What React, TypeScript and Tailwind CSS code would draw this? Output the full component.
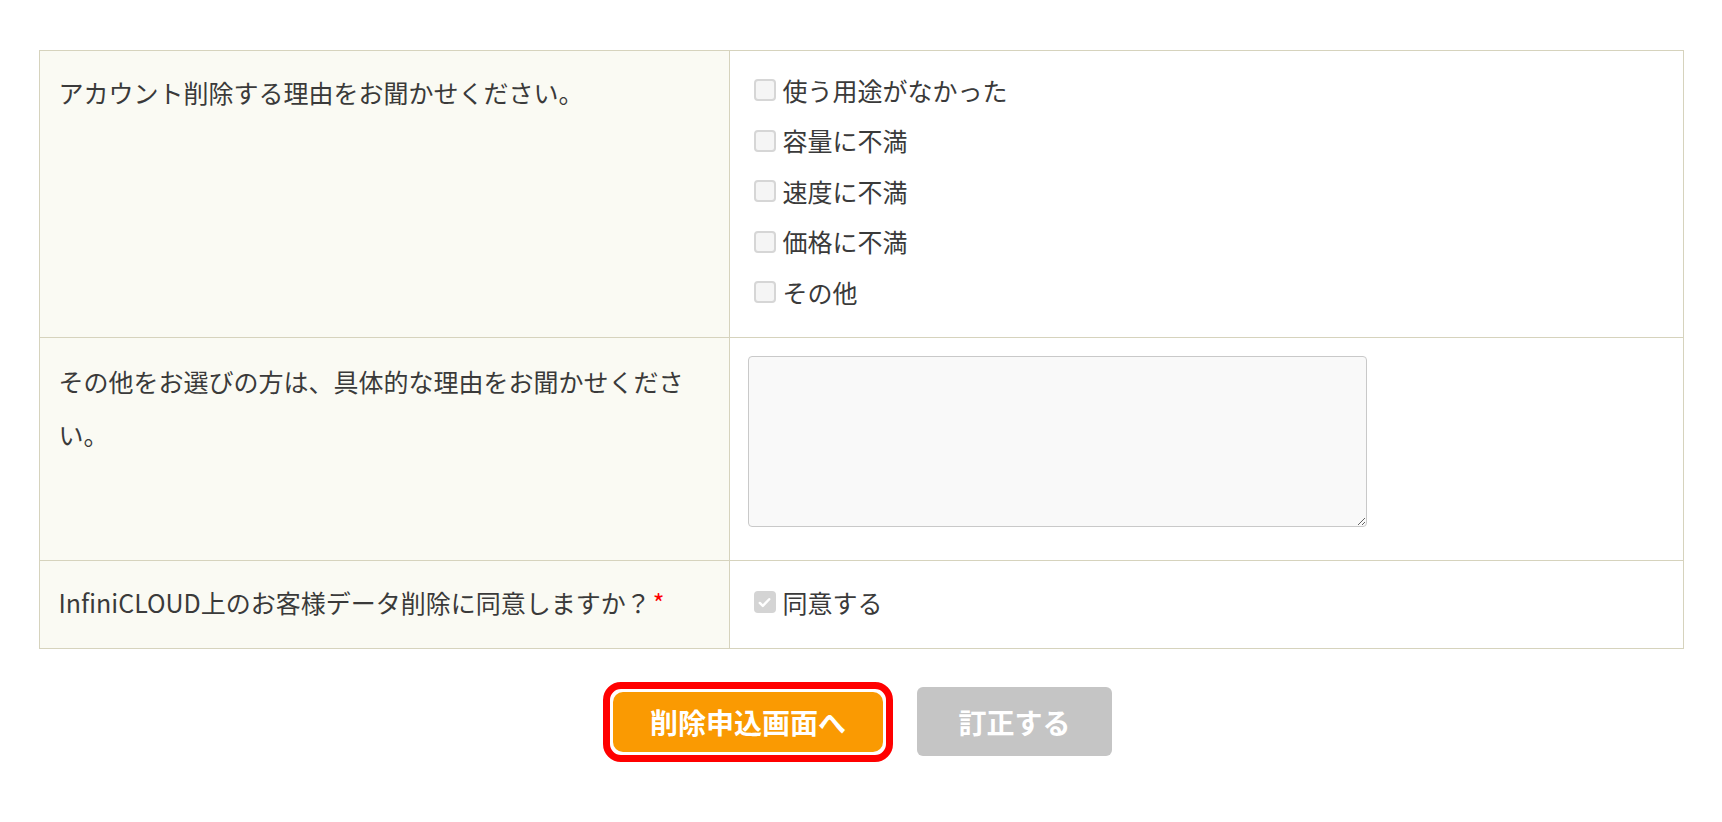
import React from 'react';

const FONT = '"Meiryo", "Noto Sans CJK JP", "Noto Sans", sans-serif';

const reasons = ['使う用途がなかった', '容量に不満', '速度に不満', '価格に不満', 'その他'];

function Box({ checked = false }: { checked?: boolean }) {
  if (checked) {
    return (
      <span className="ml-[6px] mr-[7px] inline-flex h-[22px] w-[22px] shrink-0 items-center justify-center rounded-[4px] bg-[#d4d4d4]">
        <svg viewBox="0 0 16 16" className="h-[15px] w-[15px]" fill="none" stroke="#ffffff" strokeWidth={2.6} strokeLinecap="round" strokeLinejoin="round">
          <path d="M3 8.5l3.2 3.2L13 4.5" />
        </svg>
      </span>
    );
  }
  return (
    <span className="ml-[6px] mr-[7px] inline-block h-[22px] w-[22px] shrink-0 rounded-[4px] border-2 border-[#d6d6d6] bg-[#f5f5f5]" />
  );
}

export default function App() {
  return (
    <div className="min-h-screen bg-white pt-[50px] text-[#3a3a3a]" style={{ fontFamily: FONT }}>
      <div className="mx-auto w-[1645px] border border-[#d6d3bd] text-[25px]">
        {/* reasons */}
        <div className="flex">
          <div className="w-[690px] shrink-0 border-r border-[#d6d3bd] bg-[#fafaf3] pl-[19px] pr-[30px] pt-[15px] leading-[53px]">
            アカウント削除する理由をお聞かせください。
          </div>
          <div className="flex-1 pl-[18px] pt-[14px] pb-[19px]">
            {reasons.map((r) => (
              <label key={r} className="flex h-[50.5px] items-center leading-none">
                <Box />
                <span>{r}</span>
              </label>
            ))}
          </div>
        </div>

        {/* free text */}
        <div className="flex border-t border-[#d6d3bd]">
          <div className="w-[690px] shrink-0 border-r border-[#d6d3bd] bg-[#fafaf3] pl-[19px] pr-[30px] pt-[17px] leading-[53px]">
            その他をお選びの方は、具体的な理由をお聞かせください。
          </div>
          <div className="flex-1 pl-[18px] pt-[18px] pb-[33px]">
            <textarea className="block h-[171px] w-[619px] rounded-[4px] border border-[#c9c9c9] bg-[#f9f9f9] outline-none" />
          </div>
        </div>

        {/* agreement */}
        <div className="flex border-t border-[#d6d3bd]">
          <div className="w-[690px] shrink-0 border-r border-[#d6d3bd] bg-[#fafaf3] pl-[19px] pr-[20px] pt-[15px] pb-[19px] leading-[53px]">
            InfiniCLOUD上のお客様データ削除に同意しますか？<span className="ml-[2px] text-[#ff0000]">*</span>
          </div>
          <div className="flex flex-1 items-start pl-[18px] pt-[15px]">
            <label className="flex h-[53px] items-center leading-none">
              <Box checked />
              <span>同意する</span>
            </label>
          </div>
        </div>
      </div>

      <div className="mt-[33px] flex items-center justify-center gap-[24px] pr-[7px]">
        <div className="rounded-[18px] border-[7px] border-[#ff0000] bg-white p-[3px]">
          <button className="flex h-[60px] w-[270px] items-center justify-center rounded-[10px] bg-[#fa9a02] text-[28px] font-bold text-white">
            削除申込画面へ
          </button>
        </div>
        <button className="flex h-[69px] w-[195px] items-center justify-center rounded-[6px] bg-[#c5c5c5] text-[28px] font-bold text-white">
          訂正する
        </button>
      </div>
    </div>
  );
}
